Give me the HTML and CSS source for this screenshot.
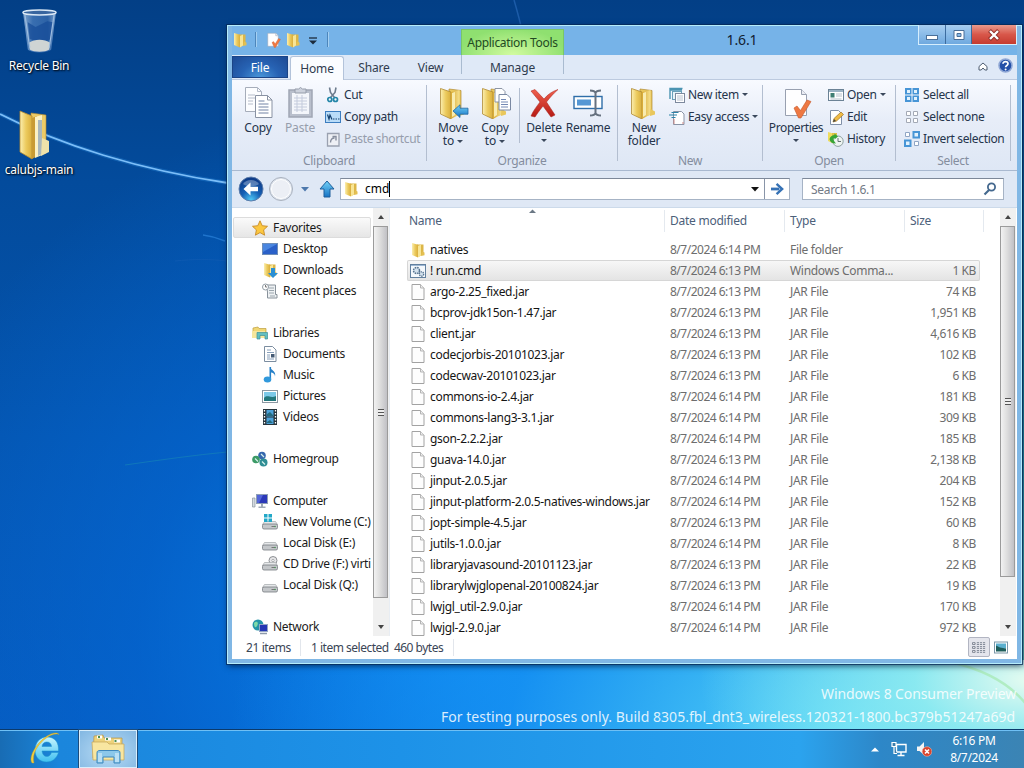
FILE: index.html
```html
<!DOCTYPE html>
<html lang="en">
<head>
    <meta charset="UTF-8">
    <meta name="viewport" content="width=device-width, initial-scale=1.0">
    <title>1.6.1</title>
    <link rel="stylesheet" href="styles.css">
</head>

<body>

    <!-- shared icons -->
    <svg class="sprite" width="0" height="0">
        <defs>
            <linearGradient id="gold" x1="0" x2="1"><stop offset="0" stop-color="#fbeeb0"/><stop offset="0.5" stop-color="#eccb5e"/><stop offset="1" stop-color="#d9ae3c"/></linearGradient>
            <linearGradient id="goldDark" x1="0" x2="1"><stop offset="0" stop-color="#d7a934"/><stop offset="1" stop-color="#f6e08d"/></linearGradient>
            <linearGradient id="arrowBlue" x1="0" y1="0" x2="0" y2="1"><stop offset="0" stop-color="#74d3f8"/><stop offset="1" stop-color="#1673c4"/></linearGradient>
            <linearGradient id="red" x1="0" y1="0" x2="0" y2="1"><stop offset="0" stop-color="#f0604e"/><stop offset="1" stop-color="#b51a14"/></linearGradient>
            <linearGradient id="glass" x1="0" x2="1"><stop offset="0" stop-color="#a9c6e6"/><stop offset="0.3" stop-color="#4a7dbd"/><stop offset="0.75" stop-color="#3a6db0"/><stop offset="1" stop-color="#a3c1e4"/></linearGradient>
            <linearGradient id="ieBlue" x1="0" y1="0" x2="0" y2="1"><stop offset="0" stop-color="#c8f5ff"/><stop offset="1" stop-color="#3fc0f0"/></linearGradient>
            <radialGradient id="backBlue" cx="0.5" cy="0.95" r="0.9"><stop offset="0" stop-color="#50c8f5"/><stop offset="0.45" stop-color="#1560b5"/><stop offset="1" stop-color="#0e3a86"/></radialGradient>
        </defs>
        <symbol id="folder" viewBox="0 0 16 16">
            <path d="M7 2.500h6.500v10L8 15z" fill="#dcb648"/>
            <path d="M2 1l6 1.800v12.700L2 13z" fill="url(#gold)"/>
            <path d="M8 4l3-1.400v10.800L8 15.500z" fill="#f8e595"/>
            <path d="M12 9.500l2.500 1v2.700L11 14z" fill="#e4c052"/>
        </symbol>
        <symbol id="folder-big" viewBox="0 0 32 32">
            <path d="M12 2l12 1.500V27l-12 3z" fill="#e9c75c" stroke="#b08a35" stroke-width="0.7"/>
            <path d="M3.500 1.500L14 5v27L3.500 27z" fill="url(#gold)" stroke="#b08a35" stroke-width="0.8"/>
            <path d="M14 5l8.500-2v24.500L14 32z" fill="url(#goldDark)"/>
            <path d="M15 6l3-1v23l-3 2z" fill="#f9ecb0"/>
            <path d="M22.500 22l4.500 2.500v3L22 29z" fill="#e9c75c"/>
        </symbol>
        <symbol id="page" viewBox="0 0 16 16">
            <path d="M2 .5h8.500l3.500 3.500v11.500H2z" fill="#fdfdfd" stroke="#a2a2a2"/>
            <path d="M10.500 .5v3.500H14" fill="#eee" stroke="#b5b5b5"/>
        </symbol>
        <symbol id="cmd" viewBox="0 0 16 16">
            <rect x=".5" y="1.500" width="15" height="13" fill="#f4f8fc" stroke="#62809f"/>
            <path d="M1 2.500h14" stroke="#9db7d3"/>
            <circle cx="6.500" cy="7.500" r="3" fill="#d4e2ee" stroke="#56738f" stroke-width="1.500" stroke-dasharray="1.600 .8"/>
            <circle cx="11.500" cy="11" r="2.200" fill="#d4e2ee" stroke="#56738f" stroke-width="1.300" stroke-dasharray="1.400 .7"/>
        </symbol>
        <symbol id="copy" viewBox="0 0 32 32">
            <path d="M3.500 .5h12l4 4v20h-16z" fill="#fcfdff" stroke="#a6adba"/>
            <path d="M15.500 .5v4h4M6 8h7M6 11h7M6 14h5M6 17h5" fill="none" stroke="#b5bcca"/>
            <path d="M13.500 8.500h12l4.500 4.500v17.500H13.500z" fill="#fff" stroke="#8992a3"/>
            <path d="M25.500 8.500V13H30" fill="none" stroke="#8992a3"/>
            <path d="M16.500 14h6M16.500 17h10M16.500 20h10M16.500 23h10M16.500 26h10" stroke="#7383a5"/>
        </symbol>
        <symbol id="paste" viewBox="0 0 32 32">
            <rect x="5" y="3" width="23" height="27" fill="#b9bfcc" stroke="#a0a6b4" stroke-width="1.500"/>
            <rect x="8" y="6" width="17" height="21" fill="#f4f6fb"/>
            <path d="M10 11h13M10 14h13M10 17h13M10 20h13M10 23h13M13 8v17M18 8v17" stroke="#c4cbdc"/>
            <path d="M11 2h3.500l2-1.500 2 1.500H22v4H11z" fill="#ccd1dc" stroke="#969dab"/>
        </symbol>
        <symbol id="cut" viewBox="0 0 16 16">
            <path d="M4.500 .5l1 5 4 5M11 .5l-1 5-4.500 5" fill="none" stroke="#6d7c8e" stroke-width="1.600"/>
            <circle cx="4.800" cy="12.500" r="2" fill="none" stroke="#2386a8" stroke-width="1.700"/>
            <circle cx="10.500" cy="12.500" r="2" fill="none" stroke="#2386a8" stroke-width="1.700"/>
        </symbol>
        <symbol id="copy-path" viewBox="0 0 16 16">
            <rect x=".5" y="2.500" width="15" height="11" fill="#b9dcf8" stroke="#3c7dbf"/>
            <path d="M2.500 5.500L4 10l1-4 2 4.500" fill="none" stroke="#15416f" stroke-width="1.200"/>
            <path d="M8 10h1.500M10.500 10H12M13 10h1.500" stroke="#15416f" stroke-width="1.200"/>
        </symbol>
        <symbol id="shortcut" viewBox="0 0 16 16">
            <path d="M2.500 2.500h11.500v12.500H2.500z" fill="#eef0f5" stroke="#9aa1b0" stroke-width="1.300"/>
            <path d="M5.500 11.500c0-3 1.500-4.500 4-4.500M7.500 5.500h3.500v4" fill="none" stroke="#868d9d" stroke-width="1.400"/>
        </symbol>
        <symbol id="move-arrow" viewBox="0 0 16 14">
            <path d="M.5 7L7.500 .8v3.400h8v6h-8v3.300z" fill="url(#arrowBlue)" stroke="#2268a4" stroke-width=".8"/>
        </symbol>
        <symbol id="move" viewBox="0 0 32 32">
            <use href="#folder-big"/>
            <use href="#move-arrow" x="15" y="17" width="17" height="14"/>
        </symbol>
        <symbol id="copy-to" viewBox="0 0 32 32">
            <use href="#folder-big"/>
            <path d="M16 1.500h7l3 3V15H16z" fill="#fff" stroke="#8c95a5"/>
            <path d="M20 7.500h8l3.500 3.500v12H20z" fill="#fff" stroke="#7b89a3"/>
            <path d="M22 12.500h5M22 15h7M22 17.500h7M22 20h7" stroke="#7489b4"/>
        </symbol>
        <symbol id="delete" viewBox="0 0 32 32">
            <path d="M3 4l4-1.500 9 9.500C20 7 25 4 30 2.500 25 7 21.500 11 18.500 15l8.500 13-4 2-8-11c-4 5-6 8-8 11l-4-1c2-5 6-10 9-14z" fill="url(#red)" stroke="#a8201a" stroke-width=".5"/>
        </symbol>
        <symbol id="rename" viewBox="0 0 32 32">
            <rect x="2" y="9.500" width="28" height="12" fill="#fff" stroke="#2f6ea9" stroke-width="1.400"/>
            <rect x="5" y="12.500" width="14" height="6" fill="#5597d4"/>
            <path d="M18 3.500c3 0 5 1 5.500 2.500C24 4.500 26 3.500 29 3.500M23.500 5v22M18 28.500c3 0 5-1 5.500-2.500 .5 1.500 2.500 2.500 5.500 2.500" fill="none" stroke="#66717f" stroke-width="2"/>
        </symbol>
        <symbol id="new-item" viewBox="0 0 16 16">
            <path d="M1 12V1.500h12.500M1 3h12" fill="none" stroke="#4b94b2" stroke-width="1.400"/>
            <rect x="3.500" y="4.500" width="9" height="8" fill="#e8f4fa" stroke="#6aa0ba"/>
            <rect x="6.500" y="6.500" width="9" height="9" fill="#fff" stroke="#7d899d"/>
            <path d="M8 9h6M8 11h6M8 13h6" stroke="#b9c2d0"/>
        </symbol>
        <symbol id="easy" viewBox="0 0 16 16">
            <path d="M4.500 2.500h8l2.500 2.500v10.500H4.500z" fill="#fff" stroke="#8a94a6"/>
            <path d="M2.500 3.500h7M0 6h8M2.500 8.500h4" stroke="#2c83a8" stroke-width="1.200"/>
            <path d="M14 13v2M5 10v5" stroke="#d08a86"/>
        </symbol>
        <symbol id="props" viewBox="0 0 32 32">
            <path d="M5.500 2.500h16l5 5v21h-21z" fill="#fefeff" stroke="#98a0b0"/>
            <path d="M21.500 2.500v5h5" fill="#eaecf3" stroke="#98a0b0"/>
            <path d="M14 21l3-2 3.500 4.500L27 13l4 1.500L21 31h-2.500z" fill="#ee7842" stroke="#c4592c" stroke-width=".6"/>
        </symbol>
        <symbol id="open" viewBox="0 0 16 16">
            <rect x=".5" y="2.500" width="15" height="11" fill="#fff" stroke="#6b8295"/>
            <path d="M1 4h14" stroke="#9bb3c4" stroke-width="2"/>
            <rect x="2.500" y="6" width="4" height="4.500" fill="#3f7e72"/>
            <path d="M8 7h6M8 9h6M2.500 12h11" stroke="#b5c1cb"/>
        </symbol>
        <symbol id="edit" viewBox="0 0 16 16">
            <path d="M2.500 1.500h8l3 3v11h-11z" fill="#fff" stroke="#8090a8"/>
            <path d="M5 13l1-3.500L13 3l2.500 2.500L8.500 12z" fill="#f0bb44" stroke="#9c7428" stroke-width=".7"/>
            <path d="M5 13l1-3 2 2z" fill="#444"/>
        </symbol>
        <symbol id="history" viewBox="0 0 16 16">
            <path d="M0 1l5 1.500v10L0 10z" fill="#eedc5d"/>
            <path d="M4 2h5v5H4z" fill="#dcc144"/>
            <circle cx="10" cy="10.200" r="5.200" fill="#eef4f1" stroke="#8ea0a0"/>
            <path d="M10 7v3.500h3" fill="none" stroke="#657474"/>
            <path d="M1.500 8c1-3 3-4 5-4V2.500L10 5.500 6.500 8.500V7C5 7 5 9 8 12.500 4 12.500 2 11 1.500 8z" fill="#36a436"/>
        </symbol>
        <symbol id="sel-all" viewBox="0 0 16 16">
            <path d="M1 1h6.500v6.500H1zM8.500 1H15v6.500H8.500zM1 8.500h6.500V15H1zM8.500 8.500H15V15H8.500z" fill="#4795d6"/>
            <path d="M3 3h3v3H3zM10 3h3v3h-3zM3 10h3v3H3zM10 10h3v3h-3z" fill="#e2f2fd"/>
        </symbol>
        <symbol id="sel-none" viewBox="0 0 16 16">
            <path d="M2.500 2.500h4v4h-4zM9.500 2.500h4v4h-4zM2.500 9.500h4v4h-4zM9.500 9.500h4v4h-4z" fill="#fff" stroke="#a3a9b5"/>
        </symbol>
        <symbol id="sel-inv" viewBox="0 0 16 16">
            <path d="M1.500 1.500h4v4h-4zM10.500 10.500h4v4h-4z" fill="#fff" stroke="#8fa5c4"/>
            <path d="M8.500 0H16v7.500H8.500zM0 8.500h7.500V16H0z" fill="#4795d6"/>
            <path d="M10.500 2H14v3.500h-3.500zM2 10.500h3.500V14H2z" fill="#e2f2fd"/>
        </symbol>
        <symbol id="disk" viewBox="0 0 16 16">
            <path d="M2.500 6.500h11l2 3H.5z" fill="#e6e8ea" stroke="#a3a7ab" stroke-width=".7"/>
            <rect x=".5" y="9" width="15" height="5" rx="1.500" fill="#c4c7ca" stroke="#777b80" stroke-width=".8"/>
            <path d="M9.500 11.500h3" stroke="#777"/><circle cx="13" cy="11.500" r=".8" fill="#3f8a4d"/>
        </symbol>
        <symbol id="monitor" viewBox="0 0 16 16">
            <path d="M.5 5h2.500v9H.5z" fill="#d5dbe0" stroke="#8b959e" stroke-width=".7"/>
            <rect x="4.500" y="1.500" width="11" height="9" fill="#2b38b8" stroke="#8f9fb5"/>
            <path d="M5 2h6L7 10H5z" fill="#5366d8"/>
            <path d="M9 11h2v2.500h2.500v1.500H6.500v-1.500H9z" fill="#9eaab5"/>
        </symbol>
        <symbol id="ie" viewBox="0 0 32 32">
            <path d="M28.500 20.500C26.500 27 22 30 16.500 30 9.500 30 5 25 5 18.500 5 10.500 10 5 17 5c8 0 12 5.500 11.500 14H12c.5 3.500 2 5.500 5 5.500 2 0 3.500-1.500 4.500-4zM12 14.500h9.500c0-2.500-2-4.500-4.700-4.500S12.200 12 12 14.500z" fill="url(#ieBlue)" stroke="#1a94cf" stroke-width=".5" fill-rule="evenodd"/>
            <path d="M2 31C-2.500 25 8 7.500 21 2c4-1.500 7-1.500 8 .5-4-1.200-8 .5-12 3C8 11.500 1.500 22 4 31z" fill="#f4cf3c" stroke="#c49a23" stroke-width=".4"/>
        </symbol>
    </svg>

    <div class="desktop">
        <!-- wallpaper light streaks -->
        <svg class="streaks" viewBox="0 0 1024 729" fill="none">
            <path d="M0 114C60 145 140 170 228 183" stroke="#2d8de0" stroke-width="4" opacity=".3"/>
            <path d="M0 114C60 145 140 170 228 183" stroke="#7cbef8" stroke-width="1.800"/>
            <path d="M514 0c3 10 5 18 7 26" stroke="#1c5ba8" stroke-width="1.500"/>
            <path d="M203 235c8 1 15 3 22 6" stroke="#1f74cc" stroke-width="1.500"/>
            <path d="M175 261c18-2 36-2 52 0" stroke="#0d5ab2"/>
            <path d="M125 465c35-5 70-10 102-13" stroke="#1787b5" opacity=".6"/>
            <path d="M950 662c36 8 60 22 76 42" stroke="#a9eab8" stroke-width="2.500" opacity=".8"/>
        </svg>

        <div class="shortcuts">
            <div class="shortcut">
                <svg class="bin" viewBox="0 0 40 46">
                    <path d="M3 3h34l-5 39c-4 4-20 4-24 0z" fill="url(#glass)" opacity=".75"/>
                    <path d="M8 14l8 5 12-6 6 1-3 18-11 3-10-4z" fill="#174c98" opacity=".75"/>
                    <path d="M9 35c6-4 16-4 22 0l-1 7c-4 3-16 3-20 0z" fill="#cfd4d4"/>
                    <path d="M5 6l5 34M35 6l-5 34" stroke="#9dbde0" stroke-width="1.200"/>
                    <ellipse cx="20" cy="4" rx="17" ry="2.500" fill="#38659f" stroke="#dbe8f5" stroke-width="1.500"/>
                </svg>
                <span>Recycle Bin</span>
            </div>
            <div class="shortcut">
                <svg class="bigfolder" viewBox="0 0 34 50">
                    <path d="M13 3l15 2v38l-15 5z" fill="#eccb67" stroke="#b58c31" stroke-width=".6"/>
                    <path d="M2 1l12 5v43L2 42z" fill="url(#gold)" stroke="#b58c31" stroke-width=".8"/>
                    <path d="M14 8l5-2v40l-5 3z" fill="#c99b33"/>
                    <path d="M17 7l7-2v40l-7 3z" fill="#fbf1c4"/>
                    <path d="M20 10h4v34l-4 2z" fill="#a9b7bb"/>
                    <path d="M24 28l7 3v11l-8 4z" fill="#eee2aa"/>
                </svg>
                <span>calubjs-main</span>
            </div>
        </div>

        <div class="watermark">
            <p class="edition">Windows 8 Consumer Preview</p>
            <p class="build">For testing purposes only. Build 8305.fbl_dnt3_wireless.120321-1800.bc379b51247a69d</p>
        </div>

        <div class="window">
            <div class="titlebar">
                <div class="quick">
                    <svg class="i16"><use href="#folder"/></svg>
                    <i class="vsep"></i>
                    <svg class="i16" viewBox="0 0 32 32"><use href="#props"/></svg>
                    <svg class="i16"><use href="#folder"/></svg>
                    <svg class="more" viewBox="0 0 8 8"><path d="M0 1h8" stroke="#1c2b3c" stroke-width="1.300"/><path d="M0 3.500h8L4 7.500z" fill="#1c2b3c"/></svg>
                    <i class="vsep"></i>
                </div>
                <div class="context-tab">Application Tools</div>
                <div class="title">1.6.1</div>
                <div class="controls">
                    <span class="control min"><svg viewBox="0 0 14 12"><rect x="1.500" y="6.500" width="11" height="4" fill="#fff" stroke="#4a6f98"/></svg></span>
                    <span class="control max"><svg viewBox="0 0 14 12"><path d="M2 1.500h10v9H2zM5 4.500h4v3H5z" fill="#fff" fill-rule="evenodd" stroke="#4a6f98"/></svg></span>
                    <span class="control close"><svg viewBox="0 0 14 12"><path d="M2.500 1.500l9 9M11.500 1.500l-9 9" stroke="#8c2b26" stroke-width="4"/><path d="M3 2l8 8M11 2l-8 8" stroke="#fff" stroke-width="2.400"/></svg></span>
                </div>
            </div>

            <div class="tabs">
                <span class="tab file">File</span>
                <span class="tab home">Home</span>
                <span class="tab share">Share</span>
                <span class="tab view">View</span>
                <span class="tab manage">Manage</span>
                <svg class="collapse" viewBox="0 0 10 9"><path d="M1 4.500L5 1l4 3.500V8H6.800L5 6 3.200 8H1z" fill="#fff" stroke="#4d5c70"/></svg>
                <svg class="help" viewBox="0 0 15 15"><circle cx="7.500" cy="7.500" r="6.500" fill="#2450a8" stroke="#8fa7d5" stroke-width="1.500"/><path d="M5 5.800C5 2.800 10 3 10 5.800 10 7.500 7.600 7.400 7.600 9.200" fill="none" stroke="#fff" stroke-width="1.700"/><circle cx="7.600" cy="11.400" r="1" fill="#fff"/></svg>
            </div>

            <div class="ribbon">
                <div class="group clipboard">
                    <div class="tools">
                        <div class="big"><svg><use href="#copy"/></svg><span>Copy</span></div>
                        <div class="big off"><svg><use href="#paste"/></svg><span>Paste</span></div>
                        <div class="list">
                            <div class="small"><svg class="i16"><use href="#cut"/></svg>Cut</div>
                            <div class="small"><svg class="i16"><use href="#copy-path"/></svg>Copy path</div>
                            <div class="small off"><svg class="i16"><use href="#shortcut"/></svg>Paste shortcut</div>
                        </div>
                    </div>
                    <div class="label">Clipboard</div>
                </div>
                <div class="group organize">
                    <div class="tools">
                        <div class="big"><svg><use href="#move"/></svg><span>Move</span><span>to <b class="caret"></b></span></div>
                        <div class="big"><svg><use href="#copy-to"/></svg><span>Copy</span><span>to <b class="caret"></b></span></div>
                        <i class="divider"></i>
                        <div class="big"><svg><use href="#delete"/></svg><span>Delete</span><b class="caret"></b></div>
                        <div class="big wide"><svg><use href="#rename"/></svg><span>Rename</span></div>
                    </div>
                    <div class="label">Organize</div>
                </div>
                <div class="group new">
                    <div class="tools">
                        <div class="big"><svg><use href="#folder-big"/></svg><span>New</span><span>folder</span></div>
                        <div class="list">
                            <div class="small"><svg class="i16"><use href="#new-item"/></svg>New item <b class="caret"></b></div>
                            <div class="small"><svg class="i16"><use href="#easy"/></svg>Easy access <b class="caret"></b></div>
                        </div>
                    </div>
                    <div class="label">New</div>
                </div>
                <div class="group open">
                    <div class="tools">
                        <div class="big"><svg><use href="#props"/></svg><span>Properties</span><b class="caret"></b></div>
                        <div class="list">
                            <div class="small"><svg class="i16"><use href="#open"/></svg>Open <b class="caret"></b></div>
                            <div class="small"><svg class="i16"><use href="#edit"/></svg>Edit</div>
                            <div class="small"><svg class="i16"><use href="#history"/></svg>History</div>
                        </div>
                    </div>
                    <div class="label">Open</div>
                </div>
                <div class="group select">
                    <div class="tools">
                        <div class="list">
                            <div class="small"><svg class="i16"><use href="#sel-all"/></svg>Select all</div>
                            <div class="small"><svg class="i16"><use href="#sel-none"/></svg>Select none</div>
                            <div class="small"><svg class="i16"><use href="#sel-inv"/></svg>Invert selection</div>
                        </div>
                    </div>
                    <div class="label">Select</div>
                </div>
            </div>

            <div class="nav">
                <svg class="round" viewBox="0 0 26 26"><circle cx="13" cy="13" r="12" fill="url(#backBlue)" stroke="#5c7dab"/><path d="M5 8a10 10 0 0 1 16 0c-4 3-12 3-16 0z" fill="#fff" opacity=".3"/><path d="M5.500 13l7-6.500v4.200h7.500v4.600h-7.500v4.200z" fill="#fff"/></svg>
                <svg class="round" viewBox="0 0 26 26"><circle cx="13" cy="13" r="11.500" fill="#dfe5ee" stroke="#a9b1be"/><circle cx="13" cy="13" r="9.500" fill="#eceff5" stroke="#fff"/></svg>
                <svg class="recent" viewBox="0 0 8 5"><path d="M0 0h8L4 4.500z" fill="#4d78ac"/></svg>
                <svg class="up" viewBox="0 0 16 18"><path d="M8 1l7 8h-4v8H5V9H1z" fill="url(#arrowBlue)" stroke="#1e5f9c"/></svg>
                <div class="address">
                    <svg class="i16"><use href="#folder"/></svg>
                    <span class="typed">cmd</span>
                    <svg class="drop" viewBox="0 0 8 5"><path d="M0 0h8L4 4.500z" fill="#111"/></svg>
                    <span class="go"><svg viewBox="0 0 14 12"><path d="M0 6h9" stroke="#3672b5" stroke-width="3"/><path d="M6 .5L12 6l-6 5.500" fill="none" stroke="#3672b5" stroke-width="2.600"/></svg></span>
                </div>
                <div class="search">
                    <span>Search 1.6.1</span>
                    <svg viewBox="0 0 14 14"><circle cx="8.500" cy="5" r="3.600" fill="#fff" stroke="#44688e" stroke-width="1.800"/><path d="M6 8L1.500 12.500" stroke="#44688e" stroke-width="2.200"/></svg>
                </div>
            </div>

            <div class="main">
                <div class="tree">
                    <div class="node root current"><svg class="i16" viewBox="0 0 16 16"><path d="M8 .8l2.200 4.900 5.300.6-3.900 3.600 1 5.300L8 12.600l-4.600 2.600 1-5.300L.5 6.300l5.300-.6z" fill="#fbc740" stroke="#c78a26" stroke-width=".9"/></svg>Favorites</div>
                    <div class="node"><svg class="i16" viewBox="0 0 16 16"><rect x=".5" y="2.500" width="15" height="11" fill="#2a60c8" stroke="#6d8db8"/><path d="M1 3h14L1 11z" fill="#4a86e0"/></svg>Desktop</div>
                    <div class="node"><svg class="i16" viewBox="0 0 16 16"><use href="#folder"/><path d="M9 6h4v5h3l-5 5-5-5h3z" fill="#2a8fd4"/></svg>Downloads</div>
                    <div class="node"><svg class="i16" viewBox="0 0 16 16"><path d="M4.500 2h9v9.500H15v3.500H5.500V9z" fill="#eef1f3" stroke="#88929b"/><path d="M7 5h5M7 7.500h5M7 10h5M8 13h5" stroke="#9ba6ae"/><circle cx="3.500" cy="4" r="3" fill="#fff" stroke="#929ca4"/><path d="M3.500 2v2h1.500" fill="none" stroke="#777"/></svg>Recent places</div>
                    <div class="node gap"></div>
                    <div class="node root"><svg class="i16" viewBox="0 0 16 16"><path d="M1 3l5-1 1 1.500h7V12H1z" fill="#f1d773" stroke="#bd9d3e" stroke-width=".7"/><path d="M0 6h13v7H0z" fill="#f6e69d"/><path d="M5 7.500h10.500V14H13v-3.500H8V14H5z" fill="#63bfc0" stroke="#3c9198" stroke-width=".7"/></svg>Libraries</div>
                    <div class="node"><svg class="i16" viewBox="0 0 16 16"><path d="M2.500 .5h8l3.500 3.500v11.500H2.500z" fill="#fff" stroke="#7b8da0"/><path d="M5 4h4M5 6.500h7M5 9h3M5 11h3M5 13h7" stroke="#88a0bb"/><path d="M9 8h3.500v3.500H9z" fill="#455a74"/></svg>Documents</div>
                    <div class="node"><svg class="i16" viewBox="0 0 16 16"><path d="M8 0c1 3.500 6.500 4 5 9.500 0-3-2.500-4-4-4V12z" fill="#2680c8"/><path d="M8.300 0v12" stroke="#2680c8" stroke-width="1.600"/><ellipse cx="5.500" cy="12.500" rx="3.800" ry="3" fill="#3199dc"/></svg>Music</div>
                    <div class="node"><svg class="i16" viewBox="0 0 16 16"><rect x=".5" y="2.500" width="15" height="12" fill="#fff" stroke="#8c98a2"/><path d="M2 4h12v9H2z" fill="#7cc9e8"/><path d="M2 10c4-4 6 1 12-2v5H2z" fill="#23777c"/></svg>Pictures</div>
                    <div class="node"><svg class="i16" viewBox="0 0 16 16"><path d="M1 0h14v16H1z" fill="#27343c"/><path d="M4.500 1h7v6.500h-7zM4.500 8.500h7V15h-7z" fill="#4da2da"/><path d="M2.500 1v14M13.500 1v14" stroke="#fff" stroke-width="1.300" stroke-dasharray="1.500 1.500"/><path d="M5 5l3-2 3 3v1H5zM5 13l3-2 3 3H5z" fill="#256c80"/></svg>Videos</div>
                    <div class="node gap"></div>
                    <div class="node root"><svg class="i16" viewBox="0 0 16 16"><circle cx="10" cy="4.500" r="3.800" fill="#3667ae"/><circle cx="4" cy="8.500" r="3.800" fill="#3c9a66"/><circle cx="11.500" cy="11.500" r="4" fill="#2f8d94"/><path d="M3 7.500l3 3M9 3l3 3M10 10.500l3 3" stroke="#d5f0ea" stroke-width="1.200"/></svg>Homegroup</div>
                    <div class="node gap"></div>
                    <div class="node root"><svg class="i16"><use href="#monitor"/></svg>Computer</div>
                    <div class="node"><svg class="i16" viewBox="0 0 16 16"><use href="#disk" y="1"/><path d="M5 0h3.500v3.500H5zM9.500 0H13v3.500H9.500zM5 4.500h3.500V8H5zM9.500 4.500H13V8H9.500z" fill="#22a8c8" transform="translate(-3 0)"/></svg>New Volume (C:)</div>
                    <div class="node"><svg class="i16"><use href="#disk" y="1"/></svg>Local Disk (E:)</div>
                    <div class="node"><svg class="i16" viewBox="0 0 16 16"><circle cx="11" cy="4.500" r="4" fill="#e6e6e8" stroke="#8d9094"/><circle cx="11" cy="4.500" r="1.200" fill="#fff" stroke="#8d9094" stroke-width=".7"/><use href="#disk"/></svg>CD Drive (F:) virti</div>
                    <div class="node"><svg class="i16"><use href="#disk" y="1"/></svg>Local Disk (Q:)</div>
                    <div class="node gap"></div>
                    <div class="node root"><svg class="i16" viewBox="0 0 16 16"><circle cx="6" cy="6" r="5.500" fill="#2494a8"/><path d="M2 4c3-3 5 0 3 3s-3 0-3-3z" fill="#7edba8"/><rect x="7.500" y="5.500" width="8" height="7" fill="#2436b4" stroke="#93a5c4"/><path d="M8 14.500h7" stroke="#8d9aab" stroke-width="1.500"/></svg>Network</div>
                </div>
                <div class="scroll">
                    <i class="arrow-up"></i>
                    <div class="thumb tree-thumb"><i class="grip"></i></div>
                    <i class="arrow-down"></i>
                </div>

                <div class="files">
                    <div class="row head">
                        <span class="name">Name</span><span class="date">Date modified</span><span class="type">Type</span><span class="size">Size</span>
                        <svg class="sort" viewBox="0 0 7 4"><path d="M0 4l3.500-3.500L7 4z" fill="#6b7885"/></svg>
                    </div>
                    <div class="row"><span class="name"><svg class="i16"><use href="#folder"/></svg>natives</span><span class="date">8/7/2024 6:14 PM</span><span class="type">File folder</span><span class="size"></span></div>
                    <div class="row selected"><span class="name"><svg class="i16"><use href="#cmd"/></svg>! run.cmd</span><span class="date">8/7/2024 6:13 PM</span><span class="type">Windows Comma...</span><span class="size">1 KB</span></div>
                    <div class="row"><span class="name"><svg class="i16"><use href="#page"/></svg>argo-2.25_fixed.jar</span><span class="date">8/7/2024 6:13 PM</span><span class="type">JAR File</span><span class="size">74 KB</span></div>
                    <div class="row"><span class="name"><svg class="i16"><use href="#page"/></svg>bcprov-jdk15on-1.47.jar</span><span class="date">8/7/2024 6:13 PM</span><span class="type">JAR File</span><span class="size">1,951 KB</span></div>
                    <div class="row"><span class="name"><svg class="i16"><use href="#page"/></svg>client.jar</span><span class="date">8/7/2024 6:13 PM</span><span class="type">JAR File</span><span class="size">4,616 KB</span></div>
                    <div class="row"><span class="name"><svg class="i16"><use href="#page"/></svg>codecjorbis-20101023.jar</span><span class="date">8/7/2024 6:13 PM</span><span class="type">JAR File</span><span class="size">102 KB</span></div>
                    <div class="row"><span class="name"><svg class="i16"><use href="#page"/></svg>codecwav-20101023.jar</span><span class="date">8/7/2024 6:13 PM</span><span class="type">JAR File</span><span class="size">6 KB</span></div>
                    <div class="row"><span class="name"><svg class="i16"><use href="#page"/></svg>commons-io-2.4.jar</span><span class="date">8/7/2024 6:14 PM</span><span class="type">JAR File</span><span class="size">181 KB</span></div>
                    <div class="row"><span class="name"><svg class="i16"><use href="#page"/></svg>commons-lang3-3.1.jar</span><span class="date">8/7/2024 6:14 PM</span><span class="type">JAR File</span><span class="size">309 KB</span></div>
                    <div class="row"><span class="name"><svg class="i16"><use href="#page"/></svg>gson-2.2.2.jar</span><span class="date">8/7/2024 6:14 PM</span><span class="type">JAR File</span><span class="size">185 KB</span></div>
                    <div class="row"><span class="name"><svg class="i16"><use href="#page"/></svg>guava-14.0.jar</span><span class="date">8/7/2024 6:13 PM</span><span class="type">JAR File</span><span class="size">2,138 KB</span></div>
                    <div class="row"><span class="name"><svg class="i16"><use href="#page"/></svg>jinput-2.0.5.jar</span><span class="date">8/7/2024 6:14 PM</span><span class="type">JAR File</span><span class="size">204 KB</span></div>
                    <div class="row"><span class="name"><svg class="i16"><use href="#page"/></svg>jinput-platform-2.0.5-natives-windows.jar</span><span class="date">8/7/2024 6:14 PM</span><span class="type">JAR File</span><span class="size">152 KB</span></div>
                    <div class="row"><span class="name"><svg class="i16"><use href="#page"/></svg>jopt-simple-4.5.jar</span><span class="date">8/7/2024 6:13 PM</span><span class="type">JAR File</span><span class="size">60 KB</span></div>
                    <div class="row"><span class="name"><svg class="i16"><use href="#page"/></svg>jutils-1.0.0.jar</span><span class="date">8/7/2024 6:14 PM</span><span class="type">JAR File</span><span class="size">8 KB</span></div>
                    <div class="row"><span class="name"><svg class="i16"><use href="#page"/></svg>libraryjavasound-20101123.jar</span><span class="date">8/7/2024 6:13 PM</span><span class="type">JAR File</span><span class="size">22 KB</span></div>
                    <div class="row"><span class="name"><svg class="i16"><use href="#page"/></svg>librarylwjglopenal-20100824.jar</span><span class="date">8/7/2024 6:13 PM</span><span class="type">JAR File</span><span class="size">19 KB</span></div>
                    <div class="row"><span class="name"><svg class="i16"><use href="#page"/></svg>lwjgl_util-2.9.0.jar</span><span class="date">8/7/2024 6:14 PM</span><span class="type">JAR File</span><span class="size">170 KB</span></div>
                    <div class="row"><span class="name"><svg class="i16"><use href="#page"/></svg>lwjgl-2.9.0.jar</span><span class="date">8/7/2024 6:14 PM</span><span class="type">JAR File</span><span class="size">972 KB</span></div>
                </div>
                <div class="scroll">
                    <i class="arrow-up"></i>
                    <div class="thumb file-thumb"><i class="grip"></i></div>
                    <i class="arrow-down"></i>
                </div>
            </div>

            <div class="status">
                <span class="count">21 items</span>
                <span class="picked">1 item selected&nbsp; 460 bytes</span>
                <span class="mode on"><svg viewBox="0 0 16 14"><path d="M.5 1.500h3v2h-3zM.5 6h3v2h-3zM.5 10.500h3v2h-3z" fill="#fff" stroke="#6f7685"/><path d="M5.500 1.500H15M5.500 3.500H15M5.500 6H15M5.500 8H15M5.500 10.500H15M5.500 12.500H15" stroke="#717988" stroke-dasharray="2.500 1"/></svg></span>
                <span class="mode"><svg viewBox="0 0 14 12"><rect x=".5" y=".5" width="13" height="11" fill="#fff" stroke="#7b98a8"/><path d="M2 2h10v5H2z" fill="#5bb0cf"/><path d="M2 4l4 2 6 1v3H2z" fill="#1e5e5b"/></svg></span>
            </div>
        </div>
    </div>

    <div class="taskbar">
        <div class="task"><svg viewBox="0 0 32 32"><use href="#ie"/></svg></div>
        <div class="task active">
            <svg viewBox="0 0 34 32">
                <path d="M3 3l9-1 1 3h18v20H2z" fill="#edd27a" stroke="#b3924a" stroke-width=".7"/>
                <path d="M6 4h5M14 6h6M23 8h6" stroke="#fff" stroke-width="3"/>
                <path d="M7 4h2M15 6h2M23.500 8h2" stroke="#4b8e52" stroke-width="2"/>
                <path d="M1 9h15l2 2h15v16H2z" fill="#f8e6a0" stroke="#c4a456" stroke-width=".7"/>
                <path d="M6 20c0-2 1-2.500 3-2.500h17c2 0 3 .5 3 2.500v10h-6v-6H12v6H6z" fill="#8cc8ea" stroke="#3f88bd"/>
                <path d="M8 20v9M10 20v9M25 20v9M27 20v9" stroke="#e8f7ff"/>
            </svg>
        </div>
        <div class="tray">
            <svg class="tray-up" viewBox="0 0 8 5"><path d="M0 4.500h8L4 .5z" fill="#fff"/></svg>
            <svg class="i16" viewBox="0 0 16 16"><path d="M5.500 3.500h9.500v7.500H5.500zM10 11v3M6.500 14.500h7" fill="none" stroke="#fff" stroke-width="1.400"/><path d="M1 1.500h4v4H1zM3 5.500v7h3" fill="#3b7dab" stroke="#fff" stroke-width="1.200"/></svg>
            <svg class="i16" viewBox="0 0 16 16"><path d="M1 5.500h2.500L8 1v13l-4.500-4H1z" fill="#f4f4f4"/><circle cx="11" cy="10.500" r="4.800" fill="#d9442c" stroke="#f3b3a2" stroke-width=".6"/><path d="M9 8.500l4 4M13 8.500l-4 4" stroke="#fff" stroke-width="1.600"/></svg>
            <div class="clock">6:16 PM<br>8/7/2024</div>
        </div>
    </div>

</body>
</html>
```
FILE: styles.css
```css
* {
    box-sizing: border-box;
}
body {
    margin: 0;
    width: 1024px;
    height: 768px;
    overflow: hidden;
    display: flex;
    flex-direction: column;
    font-family: "Noto Sans", "Open Sans", sans-serif;
    font-size: 12px;
    letter-spacing: -0.3px;
    color: #1b1b1b;
    cursor: default;
}
svg {
    display: block;
    flex: none;
}
p {
    margin: 0;
}
.sprite {
    position: absolute;
}
.i16 {
    width: 16px;
    height: 16px;
}

/* desktop */
.desktop {
    position: relative;
    flex: 1;
    overflow: hidden;
    background:
        linear-gradient(to bottom, rgba(6, 60, 130, 0) 12%, rgba(12, 125, 150, 0.9) 45%, rgba(60, 170, 160, 0.8) 85%) 1020px 0 / 4px 660px no-repeat,
        radial-gradient(ellipse 330px 170px at 1030px 680px, #e6fcf0 0%, rgba(150, 240, 240, 0.85) 35%, rgba(70, 200, 245, 0) 100%),
        radial-gradient(ellipse 620px 430px at 850px 740px, rgba(90, 220, 250, 0.98) 0%, rgba(25, 150, 245, 0.75) 55%, rgba(10, 120, 230, 0) 100%),
        radial-gradient(ellipse 620px 560px at 480px 640px, #0a84ef 0%, rgba(4, 105, 215, 0.6) 55%, rgba(0, 80, 180, 0) 100%),
        linear-gradient(to bottom, #033f86 0%, #034b9c 25%, #0454ae 60%, #0659bc 100%);
}
.streaks {
    position: absolute;
    top: 0;
    left: 0;
    width: 1024px;
    height: 729px;
}
.shortcuts {
    position: relative;
    width: 78px;
    padding-top: 8px;
    display: flex;
    flex-direction: column;
    gap: 36px;
    letter-spacing: -0.25px;
}
.shortcut {
    display: flex;
    flex-direction: column;
    align-items: center;
    color: #fff;
    line-height: 16px;
    white-space: nowrap;
    text-shadow: 1px 1px 2px #000, 0 0 2px #001a40;
}
.bin {
    width: 39px;
    height: 46px;
    margin-bottom: 4px;
}
.bigfolder {
    width: 34px;
    height: 50px;
    margin-right: 8px;
    margin-bottom: 2px;
}
.watermark {
    position: absolute;
    left: 441px;
    top: 682px;
    width: 583px;
    color: rgba(255, 255, 255, 0.85);
    font-size: 14px;
    line-height: 23px;
    white-space: nowrap;
}
.watermark .edition {
    padding-left: 380px;
    letter-spacing: -0.1px;
}
.watermark .build {
    letter-spacing: 0.02px;
}

/* explorer window */
.window {
    position: absolute;
    left: 227px;
    top: 25px;
    width: 795px;
    height: 639px;
    padding: 0 4px 4px;
    display: flex;
    flex-direction: column;
    border: 1px solid #b5ecfb;
    background: #80b7e5;
    box-shadow: 0 0 0 1px rgba(5, 40, 85, 0.7), 1px 2px 6px rgba(0, 20, 50, 0.7);
}
.titlebar {
    height: 29px;
    flex: none;
    display: flex;
    background: #76b3e8;
}
.quick {
    width: 229px;
    display: flex;
    align-items: center;
    padding-bottom: 2px;
}
.quick .vsep {
    width: 1px;
    height: 15px;
    margin: 0 9px 0 7px;
    background: #4d86bb;
    box-shadow: 1px 0 #a5d0f2;
}
.quick .i16 + .i16 {
    margin-left: 4px;
}
.quick .more {
    width: 8px;
    height: 8px;
    margin: 2px 3px 0 8px;
}
.context-tab {
    width: 103px;
    height: 26px;
    margin-top: 3px;
    line-height: 25px;
    text-align: center;
    color: #234a23;
    background: radial-gradient(ellipse at 50% 100%, #d2fba0, #8fe070 75%);
    border: solid #79c766;
    border-width: 1px 1px 0;
}
.title {
    flex: 1;
    padding-left: 2px;
    text-align: center;
    font-size: 14px;
    line-height: 28px;
    letter-spacing: -0.1px;
    color: #10202f;
}
.controls {
    display: flex;
    height: 20px;
    margin-top: -1px;
    border: solid #d6eefd;
    border-width: 0 1px 1px;
}
.control {
    display: flex;
    align-items: center;
    justify-content: center;
    background: linear-gradient(to bottom, #a6cdf0, #6fa9df);
    border-right: 1px solid #3c6c9f;
}
.control svg {
    width: 14px;
    height: 12px;
}
.control.min {
    width: 27px;
}
.control.max {
    width: 26px;
}
.control.close {
    width: 44px;
    border: none;
    background: linear-gradient(to bottom, #e99a8c 0%, #d8574a 50%, #c53b30 100%);
}

.tabs {
    height: 25px;
    flex: none;
    display: flex;
    background: #dfe9f7;
    border-bottom: 1px solid #bccadf;
}
.tab {
    line-height: 26px;
    text-align: center;
    color: #2f3b4e;
    letter-spacing: -0.15px;
}
.tab.file {
    width: 56px;
    height: 22px;
    margin-top: 1px;
    line-height: 21px;
    color: #fff;
    border: 1px solid #1b4486;
    background: radial-gradient(ellipse at 50% 110%, #4c9bdc 0%, #2763b4 50%, #1d4a94 100%);
}
.tab.home {
    width: 54px;
    height: 25px;
    margin: 1px 0 -1px 2px;
    line-height: 23px;
    background: #fafcff;
    border: 1px solid #b3c3da;
    border-bottom: none;
    border-radius: 3px 3px 0 0;
}
.tab.share {
    width: 60px;
}
.tab.view {
    width: 53px;
    margin-right: 4px;
}
.tab.manage {
    width: 103px;
    height: 19px;
    border: solid #a9bbd0;
    border-width: 0 1px;
}
.collapse {
    width: 10px;
    height: 9px;
    margin: 7px 10px 0 auto;
}
.help {
    width: 15px;
    height: 15px;
    margin: 3px 4px 0 0;
}

.ribbon {
    height: 91px;
    flex: none;
    display: flex;
    background: linear-gradient(to bottom, #f8faff 0%, #e7edf8 45%, #dee7f5 100%);
    border-bottom: 1px solid #a9b9d0;
    color: #25344b;
}
.group {
    height: 76px;
    margin-top: 5px;
    border-right: 1px solid #b3bed0;
    white-space: nowrap;
}
.clipboard {
    width: 195px;
}
.organize {
    width: 191px;
}
.new {
    width: 145px;
}
.open {
    width: 133px;
}
.select {
    width: 115px;
}
.tools {
    height: 68px;
    display: flex;
    padding-left: 5px;
}
.label {
    height: 16px;
    line-height: 16px;
    text-align: center;
    color: #848d9e;
}
.big {
    width: 42px;
    padding-top: 2px;
    display: flex;
    flex-direction: column;
    align-items: center;
    text-align: center;
    line-height: 13px;
    letter-spacing: -0.15px;
}
.big svg {
    width: 32px;
    height: 32px;
    margin-bottom: 2px;
}
.big.wide {
    width: 46px;
    letter-spacing: -0.35px;
}
.off {
    color: #969dac;
}
.list {
    margin: -2px 0 0 4px;
}
.small {
    height: 22px;
    display: flex;
    align-items: center;
    gap: 3px;
    letter-spacing: -0.35px;
}
.list .i16 {
    margin-top: 1px;
}
.caret {
    display: inline-block;
    border: solid transparent;
    border-width: 3px 3px 0;
    border-top-color: #3b485c;
    vertical-align: middle;
}
.big > .caret {
    margin-top: 5px;
}
.divider {
    width: 1px;
    height: 55px;
    margin: 3px 3px 0;
    background: #b3bed0;
}
.open .tools {
    padding-left: 3px;
}
.open .big {
    width: 60px;
    letter-spacing: -0.4px;
}
.open .list {
    margin-left: 2px;
}
.select .list {
    margin-left: 3px;
}

.nav {
    height: 37px;
    flex: none;
    display: flex;
    align-items: center;
    padding-left: 6px;
    background: #dfe8f5;
    border-bottom: 1px solid #ccdaea;
}
.round {
    width: 26px;
    height: 26px;
    margin-right: 4px;
}
.recent {
    width: 8px;
    height: 5px;
    margin: 0 10px 0 3px;
}
.up {
    width: 16px;
    height: 18px;
    margin-right: 5px;
}
.address,
.search {
    height: 22px;
    display: flex;
    align-items: center;
    background: #fff;
    border: 1px solid #a6b3c5;
    border-top-color: #7d8899;
}
.address {
    width: 450px;
    padding-left: 2px;
}
.typed {
    height: 16px;
    line-height: 16px;
    margin-left: 6px;
    color: #000;
    letter-spacing: 0;
    border-right: 1px solid #000;
}
.address .drop {
    width: 8px;
    height: 5px;
    margin: 0 5px 0 auto;
}
.go {
    width: 25px;
    height: 20px;
    display: flex;
    align-items: center;
    justify-content: center;
    border-left: 1px solid #8995a8;
}
.go svg {
    width: 13px;
    height: 12px;
}
.search {
    width: 202px;
    margin-left: 12px;
    padding: 0 6px 0 8px;
    justify-content: space-between;
    color: #727a85;
}
.search svg {
    width: 14px;
    height: 14px;
}

.main {
    flex: 1;
    min-height: 0;
    display: flex;
    background: #fff;
}
.tree {
    width: 141px;
    padding: 9px 0 0 1px;
    overflow: hidden;
    white-space: nowrap;
}
.node {
    height: 21px;
    padding-left: 29px;
    display: flex;
    align-items: center;
    gap: 5px;
}
.node.root {
    padding-left: 19px;
}
.node.current {
    margin-right: 2px;
    padding-left: 18px;
    border: 1px solid #dcdcdc;
    border-radius: 2px;
    background: linear-gradient(to bottom, #fafafa, #e6e6e6);
}
.scroll {
    width: 16px;
    flex: none;
    display: flex;
    flex-direction: column;
    padding: 7px 0 7px;
    background: #f0f0f0;
}
.arrow-up,
.arrow-down {
    width: 0;
    margin: 0 auto;
    border: solid transparent;
}
.arrow-up {
    border-width: 0 3px 4px;
    border-bottom-color: #444;
}
.arrow-down {
    margin-top: auto;
    border-width: 4px 3px 0;
    border-top-color: #444;
}
.thumb {
    margin-top: 7px;
    margin-right: 1px;
    display: flex;
    align-items: center;
    justify-content: center;
    border: 1px solid #9b9b9b;
    background: linear-gradient(to right, #f2f2f2 0%, #dedede 45%, #c0c0c5 100%);
}
.tree-thumb {
    height: 372px;
}
.file-thumb {
    height: 351px;
}
.grip {
    width: 6px;
    height: 7px;
    background: repeating-linear-gradient(to bottom, #555 0, #555 1px, #eee 1px, #eee 3px);
}
.files {
    flex: 1;
    padding: 1px 19px 0 17px;
    overflow: hidden;
    border-left: 1px solid #e8edf3;
}
.files + .scroll {
    margin-right: 1px;
}
.row {
    width: 573px;
    height: 21px;
    display: flex;
    align-items: center;
    white-space: nowrap;
    color: #6d6d6d;
}
.row .name {
    width: 263px;
    padding-left: 3px;
    display: flex;
    align-items: center;
    gap: 4px;
    color: #151515;
}
.row .date {
    width: 120px;
    letter-spacing: -0.5px;
}
.row .type {
    width: 120px;
}
.row .size {
    width: 66px;
    text-align: right;
    letter-spacing: -0.4px;
}
.row.selected {
    background: linear-gradient(to bottom, #f8f8f8, #e3e3e3);
    box-shadow: inset 0 0 0 1px #d6d6d6;
    border-radius: 2px;
}
.row.head {
    position: relative;
    height: 30px;
    padding-bottom: 6px;
    width: 577px;
}
.row.head .name,
.row.head .date,
.row.head .type,
.row.head .size {
    height: 22px;
    line-height: 22px;
    letter-spacing: -0.25px;
    color: #4c607a;
    border-right: 1px solid #e4e9ef;
}
.row.head .name {
    width: 258px;
    padding-left: 2px;
}
.row.head .date,
.row.head .type {
    padding-left: 5px;
}
.row.head .size {
    width: 79px;
    padding-left: 5px;
    text-align: left;
}
.sort {
    position: absolute;
    left: 122px;
    top: 0;
    width: 7px;
    height: 4px;
}

.status {
    height: 23px;
    flex: none;
    display: flex;
    align-items: center;
    padding: 0 5px 1px 14px;
    background: #fff;
    color: #3a4556;
}
.count {
    width: 55px;
    letter-spacing: -0.4px;
    border-right: 1px solid #e2e6ec;
}
.picked {
    flex: none;
    margin: 0 auto 0 10px;
    padding-right: 10px;
    letter-spacing: -0.5px;
    border-right: 1px solid #e2e6ec;
}
.mode {
    width: 22px;
    height: 20px;
    display: flex;
    align-items: center;
    justify-content: center;
    border: 1px solid transparent;
}
.mode.on {
    border-color: #b2b5c2;
    background: #e4e5ec;
    border-radius: 2px;
}
.mode svg {
    width: 14px;
    height: 13px;
}

/* taskbar */
.taskbar {
    height: 39px;
    flex: none;
    display: flex;
    padding-left: 16px;
    color: #fff;
    background: linear-gradient(to right, #186cb4 0, #1b86dc 60px, #1d92e8 400px, #2ba3ee 800px, #2d87c8 880px, #3b84b4 1024px);
    border-top: 1px solid #0b3a6c;
    box-shadow: inset 0 1px #6fc0f5;
}
.task {
    width: 63px;
    display: flex;
    align-items: center;
    justify-content: center;
}
.task svg {
    width: 32px;
    height: 32px;
    margin-right: 3px;
    margin-bottom: 3px;
}
.task.active {
    width: 58px;
    border: 1px solid #d8eefc;
    outline: 1px solid #1c4c7c;
    background: radial-gradient(ellipse at 50% 60%, #b9dcf5, #82b7e2);
}
.task.active svg {
    width: 34px;
    margin: 0;
}
.tray {
    margin-left: auto;
    display: flex;
    align-items: center;
    padding-right: 19px;
}
.tray-up {
    width: 8px;
    height: 5px;
    margin-right: 12px;
}
.tray .i16 + .i16 {
    margin-left: 9px;
}
.clock {
    width: 62px;
    margin-left: 11px;
    text-align: center;
    line-height: 17px;
}
```
